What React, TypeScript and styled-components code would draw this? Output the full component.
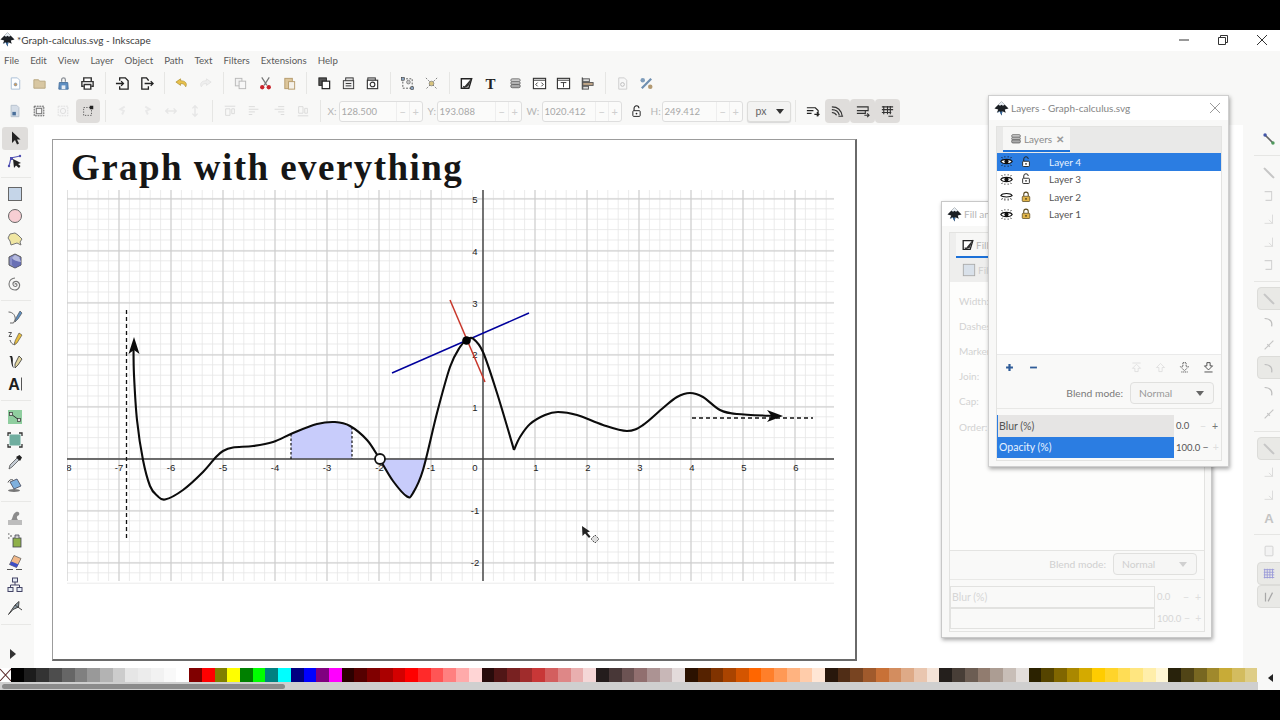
import React from 'react';
import styled, { createGlobalStyle } from 'styled-components';

const GlobalStyle = createGlobalStyle`
  html, body {
    margin: 0;
    padding: 0;
    background: #000;
  }
  * {
    box-sizing: border-box;
  }
`;

const UI_FONT = `Lato, 'Noto Sans', sans-serif`;

// 16x16 toolbar drawings
const icons: Record<string, React.ReactNode> = {
  logo: (
    <>
      <path d="M8 .5 15.5 8 11.5 9 12.5 12.5 9 11 8 15.5 6 11 3 12.5 4.5 9 .5 8Z" fill="#1b1f24" />
      <path d="M8 .5 11.5 4 9.5 5 8 4 6.5 5 4.5 4Z" fill="#e8eef4" />
      <path d="M3 12.5 6 11 8 15.5 9 11" fill="#3a6ea5" />
    </>
  ),
  newDoc: (
    <>
      <path d="M3.5 2H10L12.5 4.5V14H3.5Z" fill="#fff" stroke="#a9bfd6" />
      <circle cx="8" cy="9" r="1.6" fill="#d9a05b" stroke="#5a86b5" strokeWidth=".6" />
    </>
  ),
  open: <path d="M2 4H7L8 5.5H14V13H2Z" fill="#d8c7a2" stroke="#b7a67f" />,
  save: (
    <>
      <path d="M6 6V4A2 2 0 0 1 10 4V6" fill="none" stroke="#8a8f96" strokeWidth="1.3" />
      <path d="M3.5 7H12.5L13 14H3Z" fill="#5f8fc2" stroke="#49719d" />
      <rect x="6" y="10" width="4" height="4" fill="#e8eef5" />
    </>
  ),
  print: (
    <>
      <path d="M4 6V2H12V6M4 11H2V6H14V11H12" fill="#fff" stroke="#333" strokeWidth="1.5" />
      <path d="M4.5 9H11.5V14H4.5Z" fill="#fff" stroke="#333" strokeWidth="1.5" />
    </>
  ),
  importDoc: (
    <path d="M5 5V2H11L14 5V14H5V11M1 8H9M6.5 5.5 9 8 6.5 10.5" fill="none" stroke="#222" strokeWidth="1.4" />
  ),
  exportDoc: (
    <path d="M10 11V14H3V2H8L10 4.5V5M6 8H15M12.5 5.5 15 8 12.5 10.5" fill="none" stroke="#222" strokeWidth="1.4" />
  ),
  undo: (
    <path d="M7 3 2 6.5 7 10V8C9.5 8 11.5 9 12.5 11.5 14.5 8 12 5 7 5Z" fill="#e9c14b" stroke="#a98c2e" strokeWidth=".7" />
  ),
  redo: (
    <path d="M9 3 14 6.5 9 10V8C6.5 8 4.5 9 3.5 11.5 1.5 8 4 5 9 5Z" fill="#eeeeee" stroke="#dddddd" strokeWidth=".7" />
  ),
  duplicate: (
    <>
      <rect x="2.5" y="2.5" width="7" height="8" fill="#f2f2f2" stroke="#b8b8b8" />
      <rect x="6.5" y="5.5" width="7" height="8" fill="#f7f7f7" stroke="#b8b8b8" />
    </>
  ),
  cut: (
    <>
      <path d="M4 1.5 9.5 10M12 1.5 6.5 10" stroke="#777" strokeWidth="1.3" />
      <circle cx="4.5" cy="12" r="2.3" fill="#c8232b" />
      <circle cx="11.5" cy="12" r="2.3" fill="#c8232b" />
    </>
  ),
  paste: (
    <>
      <rect x="3" y="2.5" width="8" height="11" fill="#dcc59a" stroke="#b59b6c" />
      <rect x="7" y="6" width="6.5" height="8" fill="#f4f1ea" stroke="#b59b6c" />
    </>
  ),
  stackA: (
    <>
      <rect x="2" y="2" width="8" height="8" fill="#555" stroke="#222" />
      <rect x="5.5" y="5.5" width="8" height="8" fill="#fff" stroke="#222" strokeWidth="1.3" />
    </>
  ),
  stackB: (
    <>
      <rect x="5" y="2" width="8" height="6" fill="#ddd" stroke="#333" />
      <rect x="2.5" y="5" width="11" height="8.5" fill="#eee" stroke="#333" />
      <path d="M5 8H11M5 10.5H11" stroke="#333" />
    </>
  ),
  stackC: (
    <>
      <rect x="3" y="2" width="8" height="4" fill="#ccc" stroke="#333" />
      <rect x="2.5" y="4.5" width="11" height="9" fill="#fff" stroke="#333" strokeWidth="1.2" />
      <circle cx="8" cy="9" r="2.5" fill="none" stroke="#333" strokeWidth="1.2" />
    </>
  ),
  group: (
    <>
      <rect x="3" y="3" width="10" height="10" fill="none" stroke="#555" strokeDasharray="2 1.5" />
      <rect x="1.5" y="1.5" width="3" height="3" fill="#8fa8c4" stroke="#333" strokeWidth=".6" />
      <rect x="11.5" y="11.5" width="3" height="3" fill="#8fa8c4" stroke="#333" strokeWidth=".6" />
      <circle cx="9" cy="6.5" r="2" fill="#c7c7c7" stroke="#555" strokeWidth=".6" />
    </>
  ),
  ungroup: (
    <>
      <path d="M2 2 14 14M14 2 2 14" stroke="#777" strokeDasharray="2 1.5" />
      <circle cx="8" cy="8" r="2.5" fill="#d7c37d" stroke="#666" strokeWidth=".6" />
    </>
  ),
  fillStroke: (
    <>
      <path d="M2.5 3H13.5L10.5 13H2.5Z" fill="#fff" stroke="#222" strokeWidth="1.5" />
      <path d="M14 1.5 6 11 4 10.5 5 13 10 11Z" fill="#333" />
    </>
  ),
  text: (
    <text x="8" y="14" fontFamily="Liberation Serif, serif" fontSize="16" fontWeight="700" textAnchor="middle" fill="#222">T</text>
  ),
  layers: (
    <>
      <rect x="3" y="3" width="10" height="3" rx="1.5" fill="#ccc" stroke="#777" />
      <rect x="3" y="6" width="10" height="3" rx="1.5" fill="#bbb" stroke="#777" />
      <rect x="3" y="9" width="10" height="3.5" rx="1.5" fill="#aaa" stroke="#666" />
    </>
  ),
  xml: (
    <>
      <rect x="1.5" y="2.5" width="13" height="11" fill="#fff" stroke="#333" strokeWidth="1.2" />
      <path d="M1.5 4.5H14.5" stroke="#333" />
      <path d="M6 7 4 9 6 11M10 7 12 9 10 11" fill="none" stroke="#333" />
    </>
  ),
  windowBox: (
    <>
      <rect x="1.5" y="2.5" width="13" height="11" fill="#fff" stroke="#333" strokeWidth="1.2" />
      <path d="M1.5 4.5H14.5M5 7H11M8 7V12" stroke="#333" />
    </>
  ),
  align: (
    <>
      <path d="M2.5 1.5V14.5" stroke="#333" strokeWidth="1.2" />
      <rect x="3" y="3" width="7" height="3" fill="#ddd" stroke="#555" />
      <rect x="3" y="7" width="11" height="3" fill="#c4a98a" stroke="#555" />
      <rect x="3" y="11" width="6" height="3" fill="#ddd" stroke="#555" />
    </>
  ),
  docProps: (
    <>
      <path d="M4 2H10L12.5 4.5V14H4Z" fill="#f7f7f7" stroke="#ccc" />
      <circle cx="8" cy="9" r="2" fill="none" stroke="#bbb" />
    </>
  ),
  prefs: (
    <>
      <path d="M3 13 13 3" stroke="#6f8fb0" strokeWidth="2.4" />
      <circle cx="4" cy="4.5" r="2.4" fill="#7f9dbb" />
      <circle cx="12" cy="11.5" r="2.4" fill="#b39a72" />
    </>
  ),
  selectAll: (
    <>
      <path d="M3.5 1.5H10L12.5 4V14.5H3.5Z" fill="#d5dde7" stroke="#b4bfcc" />
      <rect x="5" y="9" width="4" height="4" fill="#4a6f9a" />
    </>
  ),
  selectLayers: (
    <>
      <rect x="2.5" y="2.5" width="11" height="11" fill="#ddd" stroke="#555" strokeDasharray="2 1" />
      <rect x="5" y="5" width="6" height="6" fill="#f5f5f5" stroke="#777" />
    </>
  ),
  deselect: (
    <>
      <rect x="2.5" y="2.5" width="11" height="11" fill="#f6f6f6" stroke="#ddd" strokeDasharray="2 1" />
      <circle cx="8" cy="8" r="3" fill="none" stroke="#ddd" />
    </>
  ),
  touch: (
    <>
      <rect x="3" y="4" width="9" height="9" fill="none" stroke="#555" strokeDasharray="1.5 1.5" />
      <rect x="10" y="2" width="4" height="4" fill="#222" />
    </>
  ),
  rotLeft: <path d="M10 3 5 6 9 8 7 12" fill="none" stroke="#e9e9e9" strokeWidth="2.2" />,
  rotRight: <path d="M6 3 11 6 7 8 9 12" fill="none" stroke="#e9e9e9" strokeWidth="2.2" />,
  flipH: <path d="M2 8H14M5 5 2 8 5 11M11 5 14 8 11 11" fill="none" stroke="#e6e6e6" strokeWidth="1.6" />,
  flipV: <path d="M8 2V14M5 5 8 2 11 5M5 11 8 14 11 11" fill="none" stroke="#e6e6e6" strokeWidth="1.6" />,
  alignTop: <path d="M2 2.5H14M3 5.5H8V13H3ZM10 5.5H13V11H10Z" fill="none" stroke="#d8d8d8" />,
  alignUp: <path d="M2 3H9M2 6H13M2 9H9M2 12H6" fill="none" stroke="#d8d8d8" />,
  alignDown: <path d="M7 3H14M3 6H14M7 9H14M10 12H14" fill="none" stroke="#d8d8d8" />,
  alignBottom: <path d="M2 13.5H14M3 3H8V10.5H3ZM10 5H13V10.5H10Z" fill="none" stroke="#d8d8d8" />,
  snapA: <path d="M2 4H11L14 7V13M2 7H9M2 10H7M10 11H15M12.5 9 15 11 12.5 13" fill="none" stroke="#222" strokeWidth="1.2" />,
  snapB: <path d="M2 3C8 3 12 6 13 13M2 6C6 6 9 8 10 12M2 9C4 9 6 10 7 12M9 13H14" fill="none" stroke="#333" strokeWidth="1.2" />,
  snapC: <path d="M2 3H14V7H2M2 7H11V10H2M2 10H8M10 12H15M13 10 15 12 13 14" fill="none" stroke="#333" strokeWidth="1.2" />,
  snapD: <path d="M2 3H14M2 6H14M2 9H12M4 2V11M8 2V11M11 2V11M9 13H14" fill="none" stroke="#333" strokeWidth="1.2" />,
  arrow: <path d="M5 1.5 5 13 8 10 10 14.5 12 13.5 10 9.5H13.5Z" fill="#222" />,
  nodes: (
    <>
      <path d="M2 13 4 5 13 3" fill="none" stroke="#5b5bb8" strokeWidth="1.2" />
      <rect x="3" y="4" width="3" height="3" fill="#4d4db0" />
      <circle cx="13" cy="3" r="1.2" fill="#4d4db0" />
      <circle cx="2" cy="13" r="1.2" fill="#4d4db0" />
      <path d="M6 6 7 15 9 12.5 12 15 13.5 13 11 11 14 10Z" fill="#222" />
    </>
  ),
  rect: <rect x="1.5" y="1.5" width="13" height="13" fill="#c5d5e8" stroke="#666" />,
  circle: <circle cx="8" cy="8" r="6.5" fill="#f7ced3" stroke="#666" />,
  star: <path d="M3 3 8 2 11 4 15 8 13 11 14 14 10 12 7 13 4 14 3 10 1 7Z" fill="#f0e6a2" stroke="#777" />,
  box3d: (
    <>
      <path d="M8 1 14 4V12L8 15 2 12V4Z" fill="#8a90c8" stroke="#555" />
      <path d="M5 5H14V12L8 15 5 12Z" fill="#5c64ac" opacity=".7" />
      <path d="M5 5 8 2 12 4 14 9C10 8 7 8 5 5Z" fill="#b5bade" />
    </>
  ),
  spiral: (
    <path d="M8 8.5C8 7 10 7.5 10 9 10 11 6.5 11 6 8.5 5.5 5.5 9.5 4.5 11.5 6.5 14 9 12 14 8 14 4 14 2 11 2 8 2 4.5 5 2 8 2" fill="none" stroke="#777" strokeWidth="1.1" />
  ),
  pen: (
    <>
      <path d="M1.5 3C6 3 9 7 8 11L6.5 14H3" fill="none" stroke="#666" />
      <path d="M9 9 13 2 15 4 11 10 8 13Z" fill="#5f8fc0" stroke="#444" strokeWidth=".6" />
    </>
  ),
  pencil: (
    <>
      <path d="M1.5 1.5H4.5L2 5.5H5M3 9C5 15 9 14 8 11" fill="none" stroke="#555" />
      <path d="M8 10 12 2 15 4 10 12 7.5 14Z" fill="#e9bf3f" stroke="#444" strokeWidth=".6" />
    </>
  ),
  calligraphy: (
    <>
      <path d="M2 2C5 2 3 12 7 14 4.5 9 7 6 5 2Z" fill="#222" />
      <path d="M8 10 12 2 15 5 11 11 8 14Z" fill="#e3d7a1" stroke="#333" strokeWidth=".8" />
    </>
  ),
  textTool: (
    <>
      <text x="7" y="14" fontFamily="Liberation Sans, sans-serif" fontSize="16" fontWeight="700" textAnchor="middle" fill="#1d1d1d">A</text>
      <path d="M14.5 1.5V14.5" stroke="#555" />
    </>
  ),
  gradient: (
    <>
      <rect x="1" y="1" width="14" height="14" fill="#8fce9f" />
      <path d="M4 5 12 11" stroke="#333" />
      <rect x="2.5" y="3.5" width="3" height="3" fill="#ddd" stroke="#333" strokeWidth=".7" />
      <rect x="10.5" y="9.5" width="3" height="3" fill="#ddd" stroke="#333" strokeWidth=".7" />
    </>
  ),
  mesh: (
    <>
      <rect x="2.5" y="2.5" width="11" height="11" fill="#6fae9f" />
      <path d="M1 4V1H4M12 1H15V4M15 12V15H12M4 15H1V12" fill="none" stroke="#333" strokeWidth="1.3" />
    </>
  ),
  dropper: (
    <>
      <path d="M2 15 3 11 10 4 12 6 5 13Z" fill="#c4ccd4" stroke="#555" strokeWidth=".8" />
      <path d="M9 3 13 7 15 3.5 12.5 1Z" fill="#222" />
    </>
  ),
  bucket: (
    <>
      <ellipse cx="7" cy="13.5" rx="6" ry="1.5" fill="#777" />
      <path d="M3 5 10 2 14 9 7 12Z" fill="#7fb0de" stroke="#445" strokeWidth=".8" />
      <path d="M1 5.5C2 3 4 2 6 3" fill="none" stroke="#555" />
    </>
  ),
  tweak: (
    <>
      <rect x="1" y="10" width="14" height="5" fill="#bdbdbd" />
      <path d="M4 10C6 9 5 4 9 2 11.5 1 13 3 12 5 10 6 9 7 11 10Z" fill="#8c8c8c" />
    </>
  ),
  spray: (
    <>
      <rect x="6" y="6" width="8" height="9" fill="#8fb04a" stroke="#445" strokeWidth=".8" />
      <path d="M8 6V3H12V6" fill="#ccc" stroke="#445" strokeWidth=".8" />
      <path d="M1 2H2.5M3 4H5M1 6H2.5" stroke="#555" />
    </>
  ),
  eraser: (
    <>
      <path d="M7 .5 14 3.5 9.5 12.5 2.5 9.5Z" fill="#f2b98a" stroke="#555" strokeWidth=".7" />
      <path d="M4.5 6.5 11.5 9.5 9.5 12.5 2.5 9.5Z" fill="#3f4fc4" />
      <path d="M0 14.5H6M9 14.5H15" stroke="#555" />
    </>
  ),
  connector: (
    <>
      <rect x="1" y="10.5" width="5" height="4" fill="#e6edf5" stroke="#446" />
      <rect x="10" y="10.5" width="5" height="4" fill="#e6edf5" stroke="#446" />
      <rect x="5.5" y="1" width="5" height="4" fill="#e6edf5" stroke="#446" />
      <path d="M8 5V8H3.5V10.5M8 8H12.5V10.5" fill="none" stroke="#446" />
    </>
  ),
  measure: (
    <path d="M1.5 14.5 8 5 12 1.5 11.5 7 6 9.5ZM8 5 15 10" fill="#8a9aa5" stroke="#444" strokeWidth="1" />
  ),
  eye: (
    <>
      <path d="M1 8C3 4.5 13 4.5 15 8 13 11.5 3 11.5 1 8Z" fill="#fff" stroke="#111" strokeWidth="1.4" />
      <circle cx="8" cy="8" r="2.6" fill="#111" />
      <path d="M3 4 2 2.5M6 3V1.5M10 3V1.5M13 4 14 2.5M3 12 2 13.5M6 13V14.5M10 13V14.5M13 12 14 13.5" stroke="#111" />
    </>
  ),
  eyeClosed: (
    <>
      <path d="M1 7C3 3.5 13 3.5 15 7 13 9 3 9 1 7Z" fill="#fff" stroke="#111" strokeWidth="1.3" />
      <path d="M3 10 2 12M6 10.5V13M10 10.5V13M13 10 14 12" stroke="#111" />
    </>
  ),
  lockOpen: (
    <>
      <path d="M5 7V4A3 3 0 0 1 11 4" fill="none" stroke="#222" strokeWidth="1.3" />
      <rect x="3.5" y="7" width="9" height="7" rx="1" fill="#fff" stroke="#222" strokeWidth="1.2" />
      <circle cx="8" cy="10.5" r="1.1" fill="#222" />
    </>
  ),
  lockClosed: (
    <>
      <path d="M5 7V4.5A3 3 0 0 1 11 4.5V7" fill="none" stroke="#5a4a20" strokeWidth="1.4" />
      <rect x="3" y="7" width="10" height="7" rx="1" fill="#e0b44a" stroke="#5a4a20" />
      <circle cx="8" cy="10.5" r="1.1" fill="#3a2f12" />
    </>
  ),
  plus: <path d="M8 3V13M3 8H13" stroke="#2f5c98" strokeWidth="3.2" />,
  minus: <path d="M3 8H13" stroke="#2f5c98" strokeWidth="2.6" />,
  layerTop: <path d="M3 2.5H13M8 4 3 9H6V13H10V9H13Z" fill="none" stroke="#dcdcdc" />,
  layerUp: <path d="M8 3 3 8H6V13H10V8H13Z" fill="none" stroke="#dcdcdc" />,
  layerDown: <path d="M6 2H10V7H13L8 12 3 7H6ZM4 13.5H12" fill="none" stroke="#444" strokeDasharray="1.5 .8" />,
  layerBottom: <path d="M6 2H10V6H13L8 11 3 6H6ZM3 13.5H13" fill="none" stroke="#333" />,
  cmdSnap: (
    <>
      <path d="M4 4 12 12" stroke="#666" strokeWidth="2" />
      <circle cx="3.5" cy="3.5" r="2" fill="#4356a8" />
      <circle cx="12.5" cy="12.5" r="2" fill="#4f9a5d" />
    </>
  ),
  cmdLine: <path d="M3 3 13 13" stroke="#c6c6c6" strokeWidth="2.4" strokeLinecap="round" />,
  cmdCorner: <path d="M3 3H11V13M11 13H4" fill="none" stroke="#d2d2d2" strokeWidth="1.2" />,
  cmdTick: <path d="M3 13H12V3M8 9 12 13" fill="none" stroke="#d8d8d8" />,
  cmdArc: <path d="M3 4C10 4 12 8 11 13" fill="none" stroke="#bcbcbc" strokeWidth="1.4" />,
  cmdDiag: <path d="M3 13 13 3M6 7 9 10" fill="none" stroke="#c6c6c6" strokeWidth="1.4" />,
  cmdA: (
    <text x="8" y="14" fontFamily="Liberation Sans, sans-serif" fontSize="15" fontWeight="700" textAnchor="middle" fill="#c4c4c4">A</text>
  ),
  cmdPage: <rect x="3.5" y="2.5" width="9" height="11" rx="1" fill="#f3f3f3" stroke="#cfcfcf" />,
  cmdGrid: <path d="M2 3H14M2 6H14M2 9H14M2 12H14M3 2V13M6 2V13M9 2V13M12 2V13" fill="none" stroke="#9a9ad8" />,
  cmdGuide: <path d="M4 3V13M7 13 12 3" fill="none" stroke="#a8a8a8" strokeWidth="1.4" />,
};

const GlyphSvg = styled.svg<{ $faded?: number }>`
  display: block;
  flex: none;
  opacity: ${(p) => p.$faded ?? 1};
`;

const Glyph = ({ name, size = 16, faded }: { name: string; size?: number; faded?: number }) => (
  <GlyphSvg width={size} height={size} viewBox="0 0 16 16" $faded={faded}>
    {icons[name]}
  </GlyphSvg>
);

const Screen = styled.div`
  position: relative;
  width: 1280px;
  height: 720px;
  overflow: hidden;
  display: flex;
  flex-direction: column;
  background: #000;
  font-family: ${UI_FONT};
  color: #444;
`;

const Letterbox = styled.div`
  height: 30px;
  flex: none;
  background: #000;
`;

const TitleBar = styled.div`
  height: 21px;
  flex: none;
  display: flex;
  align-items: center;
  padding: 0 13px 2px 0;
  background: #fff;
  font-size: 10px;
  color: #3c3c3c;
`;

const TitleText = styled.span`
  margin-left: 2px;
  flex: 1;
`;

const WindowButton = styled.svg`
  display: block;
  width: 10px;
  height: 10px;
  margin-left: 29px;
  fill: none;
  stroke: #333;
`;

const MenuBar = styled.div`
  height: 18px;
  flex: none;
  display: flex;
  align-items: center;
  gap: 11px;
  padding-left: 4px;
  background: #f8f8f7;
  font-size: 9.7px;
  color: #5a5a5a;
`;

const ToolRow = styled.div`
  height: 28px;
  flex: none;
  display: flex;
  align-items: center;
  padding-left: 3px;
  background: #f8f8f7;
  font-size: 10px;
`;

const Tool = styled.div<{ $active?: boolean; $wide?: boolean }>`
  width: ${(p) => (p.$wide ? 25 : 24.2)}px;
  height: 24px;
  flex: none;
  display: flex;
  align-items: center;
  justify-content: center;
  border-radius: 4px;
  background: ${(p) => (p.$active ? '#dfdddb' : 'transparent')};
`;

const Divider = styled.div<{ $tight?: boolean }>`
  width: 1px;
  height: 22px;
  flex: none;
  margin: 0 ${(p) => (p.$tight ? 3.9 : 4.9)}px 0 4.9px;
  background: #e6e6e4;
`;

const FieldLabel = styled.span<{ $w: number; $gap: number }>`
  width: ${(p) => p.$w}px;
  margin-left: ${(p) => p.$gap}px;
  flex: none;
  color: #b5b5b5;
  font-size: 10px;
`;

const SpinBox = styled.div<{ $w: number }>`
  width: ${(p) => p.$w}px;
  height: 21px;
  flex: none;
  display: flex;
  align-items: center;
  padding-left: 2px;
  border: 1px solid #dedede;
  border-radius: 3px;
  background: #fbfbfa;
  color: #a8a8a8;
  font-size: 9.5px;
`;

const SpinValue = styled.span`
  flex: 1;
`;

const SpinStep = styled.span`
  width: 13px;
  text-align: center;
  border-left: 1px solid #eeeeee;
  color: #cfcfcf;
  font-size: 11px;
  line-height: 19px;
`;

const LockSlot = styled.div`
  width: 29px;
  flex: none;
  display: flex;
  justify-content: center;
`;

const UnitSelect = styled.div`
  width: 44px;
  height: 21px;
  margin-left: 4px;
  flex: none;
  display: flex;
  align-items: center;
  justify-content: space-between;
  padding: 0 6px 0 8px;
  border: 1px solid #dddddb;
  border-radius: 3px;
  background: #f3f3f2;
  box-shadow: 0 1px 1px #d8d8d8;
  color: #666;
  font-size: 10.5px;
`;

const Caret = styled.span<{ $color?: string }>`
  width: 0;
  height: 0;
  border-left: 4px solid transparent;
  border-right: 4px solid transparent;
  border-top: 5px solid ${(p) => p.$color ?? '#333'};
`;

const Workspace = styled.div`
  flex: 1;
  min-height: 0;
  display: flex;
  background: #fff;
`;

const Toolbox = styled.div`
  width: 34px;
  flex: none;
  display: flex;
  flex-direction: column;
  align-items: flex-start;
  padding: 2px 0 0 2px;
  background: #f8f8f7;
`;

const BoxTool = styled.div<{ $active?: boolean }>`
  width: 26px;
  height: 22.5px;
  flex: none;
  display: flex;
  align-items: center;
  justify-content: center;
  border-radius: 3px;
  background: ${(p) => (p.$active ? '#dfdddb' : 'transparent')};
`;

const BoxRule = styled.div`
  width: 30px;
  height: 1px;
  margin: 4.75px 0 4.75px -1px;
  flex: none;
  background: #e8e8e6;
`;

const BoxMore = styled.div`
  margin: auto 0 9px 8px;
  width: 0;
  height: 0;
  border-top: 5px solid transparent;
  border-bottom: 5px solid transparent;
  border-left: 6px solid #333;
`;

const Canvas = styled.div`
  flex: 1;
  min-width: 0;
  padding: 14px 0 0 18px;
`;

const DocPage = styled.div`
  width: 805px;
  height: 522px;
  border-style: solid;
  border-color: #9c9c9c #6a6a6a #6a6a6a #9c9c9c;
  border-width: 1px 2px 2px 1px;
  background: #fff;
`;

const Heading = styled.h1`
  height: 50px;
  margin: 0;
  padding: 9px 0 0 18px;
  font-family: 'Liberation Serif', serif;
  font-size: 37px;
  font-weight: 700;
  line-height: 38px;
  letter-spacing: 1.45px;
  color: #161616;
`;

const GraphSvg = styled.svg`
  display: block;
  margin-left: 14px;
`;

const CommandBar = styled.div`
  width: 37px;
  flex: none;
  display: flex;
  flex-direction: column;
  padding: 2px 0 0 14px;
  background: #f8f8f7;
`;

const CmdTool = styled.div<{ $active?: boolean }>`
  width: 24px;
  height: 23px;
  flex: none;
  display: flex;
  align-items: center;
  justify-content: center;
  border: 1px solid ${(p) => (p.$active ? '#dcdcd9' : 'transparent')};
  border-radius: 4px 0 0 4px;
  background: ${(p) => (p.$active ? '#e9e9e6' : 'transparent')};
`;

const CmdRule = styled.div<{ $space: number }>`
  height: 1px;
  margin: ${(p) => p.$space}px 0 ${(p) => p.$space}px -3px;
  flex: none;
  background: #e6e6e4;
`;

const Palette = styled.div`
  height: 14px;
  flex: none;
  display: flex;
  background: #fff;
`;

const NoColor = styled.svg`
  display: block;
  width: 11px;
  height: 14px;
  flex: none;
`;

const Swatch = styled.div<{ $color: string }>`
  width: 12.72px;
  height: 14px;
  flex: none;
  background: ${(p) => p.$color};
`;

const PaletteEnd = styled.div`
  flex: 1;
  background: #f8f8f7;
`;

const ScrollRow = styled.div`
  height: 8px;
  flex: none;
  display: flex;
  background: #cfcfcf;
`;

const ScrollThumb = styled.div`
  width: 283px;
  height: 5px;
  margin: 2px 0 0 2px;
  border-radius: 3px;
  background: #8b8b8b;
`;

const ScrollEnd = styled.div`
  width: 22px;
  margin-left: auto;
  background: #f8f8f7;
`;

const PaletteMenu = styled.div`
  position: absolute;
  left: 1268px;
  top: 674px;
  width: 0;
  height: 0;
  border-top: 4px solid transparent;
  border-bottom: 4px solid transparent;
  border-right: 5px solid #222;
`;

const Dialog = styled.div<{ $x: number; $y: number; $w: number; $h: number; $ghost?: boolean }>`
  position: absolute;
  left: ${(p) => p.$x}px;
  top: ${(p) => p.$y}px;
  width: ${(p) => p.$w}px;
  height: ${(p) => p.$h}px;
  display: flex;
  flex-direction: column;
  border: 1px solid ${(p) => (p.$ghost ? '#c8c8c8' : '#cfcfcf')};
  background: #f8f8f7;
  box-shadow: 1px 2px 4px rgba(0, 0, 0, 0.35);
`;

const DialogTitle = styled.div<{ $ghost?: boolean }>`
  height: 24px;
  flex: none;
  display: flex;
  align-items: center;
  gap: 2px;
  padding: 0 8px 0 5px;
  background: #fff;
  font-size: 10px;
  color: ${(p) => (p.$ghost ? '#b5b5b5' : '#858585')};
  white-space: nowrap;
  overflow: hidden;
`;

const DialogName = styled.span`
  flex: 1;
`;

const DialogClose = styled.svg`
  display: block;
  width: 10px;
  height: 10px;
  fill: none;
  stroke: #9a9a9a;
`;

const Panel = styled.div<{ $ghost?: boolean }>`
  flex: 1;
  display: flex;
  flex-direction: column;
  margin: 6px 6px 5px 7px;
  border: 1px solid #e3e3e1;
  background: #f9f9f8;
  color: ${(p) => (p.$ghost ? '#d0d0d0' : '#555')};
`;

const TabStrip = styled.div`
  height: 26px;
  flex: none;
  padding-left: 6px;
  background: #e9e9e8;
`;

const Tab = styled.div<{ $w: number }>`
  width: ${(p) => p.$w}px;
  height: 25px;
  display: flex;
  align-items: center;
  justify-content: center;
  gap: 1px;
  border-bottom: 2px solid #1c71d8;
  background: #f7f7f6;
  color: #8b8b8b;
  font-size: 10px;
`;

const TabClose = styled.span`
  margin-left: 3px;
  font-size: 10px;
  font-weight: 700;
  color: #9b9b9b;
`;

const LayerList = styled.div`
  flex: 1;
  background: #fff;
  border-bottom: 1px solid #eaeaea;
`;

const LayerRow = styled.div<{ $selected?: boolean }>`
  height: 17.5px;
  display: flex;
  align-items: center;
  background: ${(p) => (p.$selected ? '#2b7de2' : 'transparent')};
  color: ${(p) => (p.$selected ? '#e8f2ff' : '#555')};
  font-size: 10px;
`;

const LayerIcon = styled.div`
  width: 19px;
  flex: none;
  display: flex;
  justify-content: center;
`;

const LayerName = styled.span`
  margin-left: 14px;
`;

const LayerTools = styled.div`
  height: 25px;
  flex: none;
  display: flex;
  align-items: center;
  padding: 0 1px 0 0;
`;

const LayerTool = styled.div`
  width: 24px;
  display: flex;
  justify-content: center;
`;

const LayerSpacer = styled.div`
  flex: 1;
`;

const BlendRow = styled.div<{ $ghost?: boolean }>`
  height: 29px;
  flex: none;
  display: flex;
  align-items: center;
  justify-content: flex-end;
  gap: 7px;
  padding: 0 7px 2px 0;
  border-bottom: 1px solid ${(p) => (p.$ghost ? '#e9e9e7' : '#e8e8e6')};
  font-size: 10.3px;
  color: ${(p) => (p.$ghost ? '#d0d0d0' : '#7a7a7a')};
`;

const BlendSelect = styled.div<{ $ghost?: boolean }>`
  width: 84px;
  height: 22px;
  display: flex;
  align-items: center;
  justify-content: space-between;
  padding: 0 9px 0 8px;
  border: 1px solid #e0e0de;
  border-radius: 4px;
  background: #f6f6f5;
  color: ${(p) => (p.$ghost ? '#d0d0d0' : '#9a9a9a')};
`;

const Sliders = styled.div`
  padding: 6px 0 2px;
`;

const SliderRow = styled.div`
  height: 21.5px;
  display: flex;
  align-items: center;
  font-size: 10.5px;
`;

const SliderTrack = styled.div<{ $tone: 'blue' | 'gray' | 'ghost' }>`
  width: ${(p) => (p.$tone === 'ghost' ? 205 : 177)}px;
  height: 21.5px;
  flex: none;
  display: flex;
  align-items: center;
  padding-left: 1px;
  border-left: 1px solid ${(p) => (p.$tone === 'ghost' ? '#e2e2e0' : '#2b7de2')};
  border: ${(p) => (p.$tone === 'ghost' ? '1px solid #e2e2e0' : undefined)};
  background: ${(p) => (p.$tone === 'blue' ? '#2b7de2' : p.$tone === 'gray' ? '#e6e5e4' : '#f9f9f8')};
  color: ${(p) => (p.$tone === 'blue' ? '#e8f2ff' : p.$tone === 'gray' ? '#555' : '#d6d6d6')};
`;

const SliderValue = styled.span<{ $ghost?: boolean }>`
  flex: 1;
  padding-left: 2px;
  font-size: 9.5px;
  color: ${(p) => (p.$ghost ? '#d6d6d6' : '#555')};
`;

const SliderStep = styled.span<{ $off?: boolean }>`
  width: 12px;
  text-align: center;
  color: ${(p) => (p.$off ? '#dedede' : '#777')};
`;

const FillTabs = styled.div`
  height: 25px;
  flex: none;
  padding-left: 6px;
  background: #eeeeed;
`;

const FillTab = styled.div`
  width: 60px;
  height: 25px;
  display: flex;
  align-items: center;
  gap: 1px;
  padding-left: 5px;
  border-bottom: 2px solid #1c71d8;
  background: #f7f7f6;
  font-size: 10px;
  color: #b5b5b5;
`;

const FillSubTab = styled.div`
  height: 24px;
  flex: none;
  display: flex;
  align-items: center;
  gap: 2px;
  padding-left: 12px;
  background: #eeeeed;
  font-size: 10px;
  color: #cfcfcf;
`;

const StrokeForm = styled.div`
  flex: 1;
  padding-top: 6px;
  border-bottom: 1px solid #e4e4e2;
  background: #fdfdfc;
`;

const StrokeLabel = styled.div`
  height: 25.2px;
  display: flex;
  align-items: center;
  padding-left: 9px;
  font-size: 10px;
  color: #d2d2d2;
`;

const swatches = [
  '#000000', '#1c1c1c', '#333333', '#4d4d4d', '#666666', '#808080', '#999999', '#b3b3b3', '#cccccc', '#e6e6e6', '#ececec', '#f2f2f2', '#f9f9f9', '#ffffff',
  '#800000', '#ff0000', '#808000', '#ffff00', '#008000', '#00ff00', '#008080', '#00ffff', '#000080', '#0000ff', '#800080', '#ff00ff',
  '#2b0000', '#550000', '#800000', '#aa0000', '#d40000', '#ff0000', '#ff2a2a', '#ff5555', '#ff8080', '#ffaaaa', '#ffd5d5',
  '#280b0b', '#501616', '#782121', '#a02c2c', '#c83737', '#d35f5f', '#de8787', '#e9afaf', '#f4d7d7',
  '#241c1c', '#483737', '#6c5353', '#916f6f', '#ac9393', '#c8b7b7', '#e3dbdb',
  '#2b1100', '#552200', '#803300', '#aa4400', '#d45500', '#ff6600', '#ff7f2a', '#ff9955', '#ffb380', '#ffccaa', '#ffe6d5',
  '#28170b', '#502d16', '#784421', '#a05a2c', '#c87137', '#d38d5f', '#deaa87', '#e9c6af', '#f4e3d7',
  '#241f1c', '#483e37', '#6c5d53', '#917c6f', '#ac9d93', '#c8beb7', '#e3dedb',
  '#2b2200', '#554400', '#806600', '#aa8800', '#d4aa00', '#ffcc00', '#ffd42a', '#ffdd55', '#ffe680', '#ffeeaa', '#fff6d5',
  '#28220b', '#504416', '#786721', '#a0892c', '#c8ab37', '#d3bc5f', '#decd87',
];

const toolbarTop = [
  ['newDoc', 'open', 'save', 'print'],
  ['importDoc', 'exportDoc'],
  ['undo', 'redo'],
  ['duplicate', 'cut', 'paste'],
  ['stackA', 'stackB', 'stackC'],
  ['group', 'ungroup'],
  ['fillStroke', 'text', 'layers', 'xml', 'windowBox', 'align'],
  ['docProps', 'prefs'],
];

const toolbarSelect = [
  ['selectAll', 'selectLayers', 'deselect', 'touch'],
  ['rotLeft', 'rotRight', 'flipH', 'flipV'],
  ['alignTop', 'alignUp', 'alignDown', 'alignBottom'],
];

const toolboxGroups = [
  ['arrow', 'nodes'],
  ['rect', 'circle', 'star', 'box3d', 'spiral'],
  ['pen', 'pencil', 'calligraphy', 'textTool'],
  ['gradient', 'mesh', 'dropper', 'bucket'],
  ['tweak', 'spray', 'eraser', 'connector', 'measure'],
];

const layers = [
  { name: 'Layer 4', eye: 'eye', lock: 'lockOpen', selected: true },
  { name: 'Layer 3', eye: 'eye', lock: 'lockOpen' },
  { name: 'Layer 2', eye: 'eyeClosed', lock: 'lockClosed' },
  { name: 'Layer 1', eye: 'eye', lock: 'lockClosed' },
];

const strokeLabels = ['Width:', 'Dashes:', 'Markers:', 'Join:', 'Cap:', 'Order:'];

type Pt = [number, number];

// catmull-rom through the traced points
const smooth = (pts: Pt[]) => {
  let d = `M${pts[0][0]} ${pts[0][1]}`;
  for (let i = 0; i < pts.length - 1; i++) {
    const p0 = pts[i - 1] ?? pts[i];
    const p1 = pts[i];
    const p2 = pts[i + 1];
    const p3 = pts[i + 2] ?? p2;
    const c1x = p1[0] + (p2[0] - p0[0]) / 6;
    const c1y = p1[1] + (p2[1] - p0[1]) / 6;
    const c2x = p2[0] - (p3[0] - p1[0]) / 6;
    const c2y = p2[1] - (p3[1] - p1[1]) / 6;
    d += `C${c1x.toFixed(1)} ${c1y.toFixed(1)} ${c2x.toFixed(1)} ${c2y.toFixed(1)} ${p2[0]} ${p2[1]}`;
  }
  return d;
};

const curveLeft: Pt[] = [
  [133.5, 345], [134, 375], [137, 420], [143, 460], [150, 486], [157, 495.5], [165, 499.5], [183, 490], [203, 472],
  [216, 457], [223, 451], [233, 447.5], [253, 446], [273, 442], [293, 433], [317, 424], [335, 422], [350, 426], [367, 440],
  [379, 458], [393, 481], [407, 496.5], [413, 493], [423, 470], [437, 413], [450, 367], [460, 347], [467, 340], [473, 338.5],
  [483, 352], [497, 393], [514, 450],
];
const curveRight: Pt[] = [
  [514, 450], [520, 437], [530, 424], [545, 415], [558, 412], [577, 415], [603, 425], [627, 431], [643, 425], [663, 408], [677, 397],
  [690, 393], [703, 397], [720, 410], [737, 414], [775, 416],
];
const shadeA: Pt[] = [[291, 434], [317, 424], [335, 422], [352, 427]];
const shadeB: Pt[] = [[380, 459], [393, 481], [407, 496.5], [413, 493], [423, 470], [426, 459]];

const majorX = Array.from({ length: 15 }, (_, i) => 67 + i * 52);
const majorY = Array.from({ length: 8 }, (_, i) => 199 + i * 52);
const minorX = Array.from({ length: 74 }, (_, i) => 67 + i * 10.4);
const minorY = Array.from({ length: 38 }, (_, i) => 188 + (i + 1) * 10.4);
const xLabels: [string, number][] = [
  ['8', 69], ['-7', 119], ['-6', 171], ['-5', 223], ['-4', 275], ['-3', 327], ['-2', 379.5], ['-1', 431],
  ['1', 536], ['2', 588], ['3', 640], ['4', 692], ['5', 744], ['6', 796],
];
const yLabels: [string, number][] = [
  ['5', 199], ['4', 251], ['3', 303], ['2', 354], ['1', 407], ['-1', 510], ['-2', 562],
];

const Graph = () => (
  <GraphSvg width={770} height={395} viewBox="67 190 770 395">
    {minorX.map((x) => (
      <line key={x} x1={x} x2={x} y1={190} y2={581} stroke="#e6e6e6" strokeWidth={0.8} />
    ))}
    {minorY.map((y) => (
      <line key={y} x1={67} x2={834} y1={y} y2={y} stroke="#e6e6e6" strokeWidth={0.8} />
    ))}
    {majorX.map((x) => (
      <line key={x} x1={x} x2={x} y1={190} y2={581} stroke="#cbcbcb" />
    ))}
    {majorY.map((y) => (
      <line key={y} x1={67} x2={834} y1={y} y2={y} stroke="#cbcbcb" />
    ))}
    <path d={`${smooth(shadeA)}L352 459L291 459Z`} fill="#c8ccfb" />
    <path d={`${smooth(shadeB)}Z`} fill="#c8ccfb" />
    <line x1={67} x2={834} y1={459} y2={459} stroke="#444" strokeWidth={1.4} />
    <line x1={483} x2={483} y1={190} y2={581} stroke="#444" strokeWidth={1.4} />
    <g fontFamily="Liberation Sans, sans-serif" fontSize={9.5} fill="#222" textAnchor="middle">
      {xLabels.map(([t, x]) => (
        <text key={t} x={x} y={470.5}>{t}</text>
      ))}
      <text x={475} y={470.5}>0</text>
      {yLabels.map(([t, y]) => (
        <text key={t} x={475} y={y + 3.5}>{t}</text>
      ))}
    </g>
    <line x1={126.5} x2={126.5} y1={310} y2={540} stroke="#111" strokeWidth={1.3} strokeDasharray="4 3" />
    <line x1={692} x2={813} y1={418} y2={418} stroke="#111" strokeWidth={1.3} strokeDasharray="4 3" />
    <line x1={291} x2={291} y1={434} y2={459} stroke="#111" strokeWidth={1.2} strokeDasharray="2.5 2" />
    <line x1={352} x2={352} y1={427} y2={459} stroke="#111" strokeWidth={1.2} strokeDasharray="2.5 2" />
    <line x1={392} y1={373} x2={529} y2={313} stroke="#00009c" strokeWidth={1.5} />
    <line x1={450} y1={300} x2={485} y2={382} stroke="#c8372b" strokeWidth={1.5} />
    <path d={smooth(curveLeft)} fill="none" stroke="#0c0c0c" strokeWidth={2.1} />
    <path d={smooth(curveRight)} fill="none" stroke="#0c0c0c" strokeWidth={2.1} />
    <path d="M134 337 139.5 354 134 350 128.5 354Z" fill="#0c0c0c" />
    <path d="M783 416 767 410 771.5 416 767 422Z" fill="#0c0c0c" />
    <circle cx={380} cy={459} r={5} fill="#fff" stroke="#111" strokeWidth={1.8} />
    <circle cx={466.5} cy={340.5} r={4.3} fill="#000" />
    <path d="M582 526 582.5 536 585 533.5 589 538 590.5 536.5 587 532.5 590 531.5Z" fill="#222" />
    <path d="M595 535 599 539 595 543 591 539Z" fill="#ddd" stroke="#444" strokeDasharray="1.5 1" />
  </GraphSvg>
);

const Spin = ({ value, width }: { value: string; width: number }) => (
  <SpinBox $w={width}>
    <SpinValue>{value}</SpinValue>
    <SpinStep>−</SpinStep>
    <SpinStep>+</SpinStep>
  </SpinBox>
);

const FillDialog = () => (
  <Dialog $x={941} $y={201} $w={271} $h={437} $ghost>
    <DialogTitle $ghost>
      <Glyph name="logo" size={15} />
      <DialogName>Fill and Stroke</DialogName>
    </DialogTitle>
    <Panel $ghost>
      <FillTabs>
        <FillTab>
          <Glyph name="fillStroke" size={14} />
          Fill
        </FillTab>
      </FillTabs>
      <FillSubTab>
        <Glyph name="rect" size={14} faded={0.5} />
        Fill
      </FillSubTab>
      <StrokeForm>
        {strokeLabels.map((label) => (
          <StrokeLabel key={label}>{label}</StrokeLabel>
        ))}
      </StrokeForm>
      <BlendRow $ghost>
        Blend mode:
        <BlendSelect $ghost>
          Normal
          <Caret $color="#d0d0d0" />
        </BlendSelect>
      </BlendRow>
      <Sliders>
        <SliderRow>
          <SliderTrack $tone="ghost">Blur (%)</SliderTrack>
          <SliderValue $ghost>0.0</SliderValue>
          <SliderStep $off>−</SliderStep>
          <SliderStep $off>+</SliderStep>
        </SliderRow>
        <SliderRow>
          <SliderTrack $tone="ghost" />
          <SliderValue $ghost>100.0</SliderValue>
          <SliderStep $off>−</SliderStep>
          <SliderStep $off>+</SliderStep>
        </SliderRow>
      </Sliders>
    </Panel>
  </Dialog>
);

const LayersDialog = () => (
  <Dialog $x={988} $y={95} $w={241} $h={372}>
    <DialogTitle>
      <Glyph name="logo" size={15} />
      <DialogName>Layers - Graph-calculus.svg</DialogName>
      <DialogClose viewBox="0 0 10 10">
        <path d="M0 0 10 10M10 0 0 10" />
      </DialogClose>
    </DialogTitle>
    <Panel>
      <TabStrip>
        <Tab $w={67}>
          <Glyph name="layers" size={14} />
          Layers
          <TabClose>✕</TabClose>
        </Tab>
      </TabStrip>
      <LayerList>
        {layers.map((layer) => (
          <LayerRow key={layer.name} $selected={layer.selected}>
            <LayerIcon>
              <Glyph name={layer.eye} size={13} />
            </LayerIcon>
            <LayerIcon>
              <Glyph name={layer.lock} size={12} />
            </LayerIcon>
            <LayerName>{layer.name}</LayerName>
          </LayerRow>
        ))}
      </LayerList>
      <LayerTools>
        <LayerTool>
          <Glyph name="plus" size={11} />
        </LayerTool>
        <LayerTool>
          <Glyph name="minus" size={11} />
        </LayerTool>
        <LayerSpacer />
        <LayerTool>
          <Glyph name="layerTop" size={13} />
        </LayerTool>
        <LayerTool>
          <Glyph name="layerUp" size={13} />
        </LayerTool>
        <LayerTool>
          <Glyph name="layerDown" size={13} />
        </LayerTool>
        <LayerTool>
          <Glyph name="layerBottom" size={13} />
        </LayerTool>
      </LayerTools>
      <BlendRow>
        Blend mode:
        <BlendSelect>
          Normal
          <Caret $color="#666" />
        </BlendSelect>
      </BlendRow>
      <Sliders>
        <SliderRow>
          <SliderTrack $tone="gray">Blur (%)</SliderTrack>
          <SliderValue>0.0</SliderValue>
          <SliderStep $off>−</SliderStep>
          <SliderStep>+</SliderStep>
        </SliderRow>
        <SliderRow>
          <SliderTrack $tone="blue">Opacity (%)</SliderTrack>
          <SliderValue>100.0</SliderValue>
          <SliderStep>−</SliderStep>
          <SliderStep $off>+</SliderStep>
        </SliderRow>
      </Sliders>
    </Panel>
  </Dialog>
);

function App() {
  return (
    <Screen>
      <GlobalStyle />
      <Letterbox />
      <TitleBar>
        <Glyph name="logo" size={15} />
        <TitleText>*Graph-calculus.svg - Inkscape</TitleText>
        <WindowButton viewBox="0 0 10 10">
          <path d="M0 5H10" />
        </WindowButton>
        <WindowButton viewBox="0 0 10 10">
          <path d="M.5 2.5H7.5V9.5H.5ZM2.5 2.5V.5H9.5V7.5H7.5" />
        </WindowButton>
        <WindowButton viewBox="0 0 10 10">
          <path d="M0 0 10 10M10 0 0 10" />
        </WindowButton>
      </TitleBar>
      <MenuBar>
        {['File', 'Edit', 'View', 'Layer', 'Object', 'Path', 'Text', 'Filters', 'Extensions', 'Help'].map((item) => (
          <span key={item}>{item}</span>
        ))}
      </MenuBar>
      <ToolRow>
        {toolbarTop.map((group, i) => (
          <React.Fragment key={group[0]}>
            {i > 0 && <Divider />}
            {group.map((name) => (
              <Tool key={name}>
                <Glyph name={name} size={15} />
              </Tool>
            ))}
          </React.Fragment>
        ))}
      </ToolRow>
      <ToolRow>
        {toolbarSelect.map((group, i) => (
          <React.Fragment key={group[0]}>
            {i > 0 && <Divider />}
            {group.map((name) => (
              <Tool key={name} $active={name === 'touch'}>
                <Glyph name={name} size={14} />
              </Tool>
            ))}
          </React.Fragment>
        ))}
        <Divider />
        <FieldLabel $w={11} $gap={2}>X:</FieldLabel>
        <Spin value="128.500" width={84} />
        <FieldLabel $w={9} $gap={5}>Y:</FieldLabel>
        <Spin value="193.088" width={85} />
        <FieldLabel $w={15} $gap={5}>W:</FieldLabel>
        <Spin value="1020.412" width={80} />
        <LockSlot>
          <Glyph name="lockOpen" size={13} />
        </LockSlot>
        <FieldLabel $w={11} $gap={0}>H:</FieldLabel>
        <Spin value="249.412" width={81} />
        <UnitSelect>
          px
          <Caret />
        </UnitSelect>
        <Divider $tight />
        <Tool $wide>
          <Glyph name="snapA" size={15} />
        </Tool>
        <Tool $wide $active>
          <Glyph name="snapB" size={15} />
        </Tool>
        <Tool $wide $active>
          <Glyph name="snapC" size={15} />
        </Tool>
        <Tool $wide $active>
          <Glyph name="snapD" size={15} />
        </Tool>
      </ToolRow>
      <Workspace>
        <Toolbox>
          {toolboxGroups.map((group, i) => (
            <React.Fragment key={group[0]}>
              {i > 0 && <BoxRule />}
              {group.map((name) => (
                <BoxTool key={name} $active={name === 'arrow'}>
                  <Glyph name={name} size={16} />
                </BoxTool>
              ))}
            </React.Fragment>
          ))}
          <BoxRule />
          <BoxMore />
        </Toolbox>
        <Canvas>
          <DocPage>
            <Heading>Graph with everything</Heading>
            <Graph />
          </DocPage>
        </Canvas>
        <CommandBar>
          <CmdTool>
            <Glyph name="cmdSnap" size={14} />
          </CmdTool>
          <CmdRule $space={5} />
          {['cmdLine', 'cmdCorner', 'cmdTick', 'cmdTick', 'cmdCorner'].map((name, i) => (
            <CmdTool key={`a${i}`}>
              <Glyph name={name} size={14} />
            </CmdTool>
          ))}
          <CmdRule $space={5} />
          {['cmdLine', 'cmdArc', 'cmdDiag', 'cmdArc', 'cmdArc', 'cmdDiag'].map((name, i) => (
            <CmdTool key={`b${i}`} $active={i === 0 || i === 3}>
              <Glyph name={name} size={14} />
            </CmdTool>
          ))}
          <CmdRule $space={5.5} />
          {['cmdLine', 'cmdTick', 'cmdTick', 'cmdA'].map((name, i) => (
            <CmdTool key={`c${i}`} $active={i === 0}>
              <Glyph name={name} size={14} />
            </CmdTool>
          ))}
          <CmdRule $space={4.5} />
          <CmdTool>
            <Glyph name="cmdPage" size={14} />
          </CmdTool>
          <CmdTool $active>
            <Glyph name="cmdGrid" size={14} />
          </CmdTool>
          <CmdTool $active>
            <Glyph name="cmdGuide" size={14} />
          </CmdTool>
        </CommandBar>
      </Workspace>
      <Palette>
        <NoColor viewBox="0 0 11 14">
          <rect width="11" height="14" fill="#fff" />
          <path d="M0 1 11 13M11 1 0 13" stroke="#5a2a2a" strokeWidth="1.1" />
        </NoColor>
        {swatches.map((color, i) => (
          <Swatch key={`${color}${i}`} $color={color} />
        ))}
        <PaletteEnd />
      </Palette>
      <ScrollRow>
        <ScrollThumb />
        <ScrollEnd />
      </ScrollRow>
      <PaletteMenu />
      <Letterbox />
      <FillDialog />
      <LayersDialog />
    </Screen>
  );
}

export default App;
